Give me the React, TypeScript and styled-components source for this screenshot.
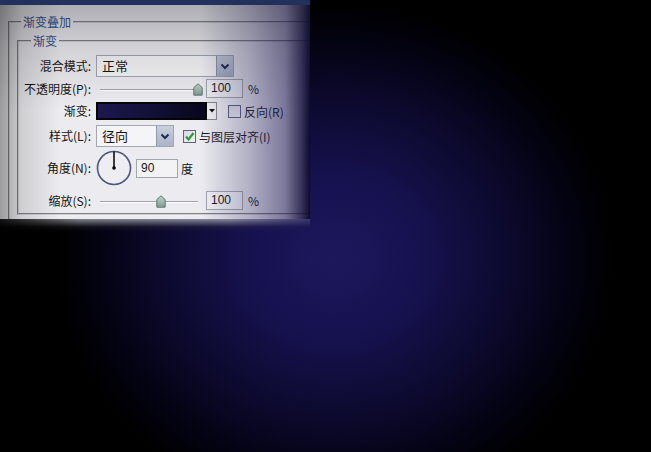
import React from "react";
import styled, { createGlobalStyle } from "styled-components";

const GlobalStyle = createGlobalStyle`
  html, body {
    margin: 0;
    padding: 0;
    background: #000;
  }
  body {
    font-family: "Noto Sans CJK SC", "Liberation Sans", sans-serif;
  }
`;

const Stage = styled.div`
  width: 651px;
  height: 452px;
  overflow: hidden;
  display: flex;
  flex-direction: column;
  align-items: flex-start;
  background:
    radial-gradient(ellipse 280px 255px at 335px 258px, #1d185c 0%, #161250 30%, #0d0a30 60%, #030210 86%, #000 100%),
    #000;
`;

const Panel = styled.div`
  position: relative;
  width: 310px;
  height: 219px;
  box-sizing: border-box;
  overflow: hidden;
  background: #ececf0;
  border-top: 5px solid #22305c;
  font-size: 12px;
  color: #141414;

  &::after {
    content: "";
    position: absolute;
    inset: -5px 0 0 0;
    pointer-events: none;
    background:
      linear-gradient(to right, rgba(0, 0, 0, 0.34) 0px, rgba(0, 0, 0, 0.12) 22px, rgba(0, 0, 0, 0) 60px),
      linear-gradient(to bottom, rgba(30, 30, 40, 0.32) 0px, rgba(30, 30, 40, 0.12) 50px, rgba(0, 0, 0, 0) 110px),
      linear-gradient(to right, rgba(20, 16, 70, 0) 200px, rgba(40, 34, 95, 0.3) 250px, rgba(30, 25, 85, 0.55) 285px, rgba(20, 16, 60, 0.85) 302px, #0e0b30 310px);
  }
`;

const Glow = styled.div`
  width: 310px;
  height: 13px;
  background: linear-gradient(to bottom, rgba(175, 175, 185, 0.75), rgba(60, 60, 70, 0.25) 60%, rgba(0, 0, 0, 0));
  -webkit-mask-image: linear-gradient(to right, rgba(0, 0, 0, 0.15) 0, #000 80px, #000 230px, rgba(0, 0, 0, 0.3) 310px);
  mask-image: linear-gradient(to right, rgba(0, 0, 0, 0.15) 0, #000 80px, #000 230px, rgba(0, 0, 0, 0.3) 310px);
`;

const Group = styled.fieldset<{ $ml: number; $pt: number; $pl: number }>`
  margin: 0 -40px 0 ${(p) => p.$ml}px;
  padding: ${(p) => p.$pt}px 0 4px ${(p) => p.$pl}px;
  border: 2px groove #d2d2d8;
  border-right: none;
  min-width: 0;
`;

const Legend = styled.legend<{ $ml: number }>`
  margin-left: ${(p) => p.$ml}px;
  padding: 0 2px;
  color: #34508c;
  font-size: 12px;
  line-height: 17px;
`;

const Rows = styled.div`
  display: flex;
  flex-direction: column;
`;

const Row = styled.div<{ $h: number; $mt: number }>`
  display: grid;
  grid-template-columns: 72px 1fr;
  column-gap: 5px;
  align-items: center;
  height: ${(p) => p.$h}px;
  margin-top: ${(p) => p.$mt}px;
`;

const Label = styled.span`
  text-align: right;
  white-space: nowrap;
  line-height: 14px;
`;

const Controls = styled.div`
  display: flex;
  align-items: center;
  height: 100%;
`;

const SelectBox = styled.div<{ $w: number }>`
  width: ${(p) => p.$w}px;
  height: 22px;
  box-sizing: border-box;
  display: flex;
  border: 1px solid #a2a6b0;
  background: #f5f5f7;
`;

const SelectText = styled.span`
  flex: 1;
  padding-left: 5px;
  line-height: 20px;
  font-size: 13px;
`;

const DropButton = styled.div`
  width: 16px;
  display: flex;
  align-items: center;
  justify-content: center;
  border-left: 1px solid #8e98ae;
  background: linear-gradient(to bottom, #c8cfdc, #aab4c6);
`;

const SliderBox = styled.div<{ $w: number }>`
  position: relative;
  width: ${(p) => p.$w}px;
  height: 18px;
  flex: none;
`;

const Track = styled.div`
  position: absolute;
  left: 4px;
  right: 4px;
  top: 9px;
  height: 1px;
  background: #a2a2a8;
  box-shadow: 0 1px 0 #ffffff;
`;

const Thumb = styled.svg`
  position: absolute;
  top: 3px;
  transform: translateX(-50%);
`;

const NumInput = styled.div<{ $w: number; $ml: number }>`
  width: ${(p) => p.$w}px;
  height: 19px;
  margin-left: ${(p) => p.$ml}px;
  box-sizing: border-box;
  border: 1px solid #a4a6ae;
  background: #f3f3f5;
  padding-left: 4px;
  font-family: "Liberation Sans", "Noto Sans CJK SC", sans-serif;
  font-size: 12px;
  line-height: 17px;
  color: #1a1a1a;
`;

const Unit = styled.span<{ $ml: number }>`
  margin-left: ${(p) => p.$ml}px;
  font-size: 12px;
`;

const Swatch = styled.div`
  width: 111px;
  height: 18px;
  box-sizing: border-box;
  border: 2px solid #050505;
  background: linear-gradient(to right, #1c1850, #120f36 55%, #07061a);
`;

const SmallArrow = styled.div`
  width: 10px;
  height: 18px;
  box-sizing: border-box;
  border: 1px solid #8a8a90;
  border-left: none;
  background: #f1f1f3;
  display: flex;
  align-items: center;
  justify-content: center;
`;

const Check = styled.div<{ $ml: number }>`
  width: 13px;
  height: 13px;
  margin-left: ${(p) => p.$ml}px;
  box-sizing: border-box;
  border: 1px solid #5c6480;
  background: linear-gradient(135deg, #d8d8e0, #f4f4f6);
  display: flex;
  align-items: center;
  justify-content: center;
  flex: none;
`;

const CheckText = styled.span`
  margin-left: 3px;
  white-space: nowrap;
  font-size: 12px;
  color: #1c1c1c;
`;

const Chevron = () => (
  <svg width="10" height="7" viewBox="0 0 10 7">
    <path d="M1.5 1.5 L5 5 L8.5 1.5" fill="none" stroke="#1d2958" strokeWidth="2" />
  </svg>
);

const ThumbIcon = ({ x }: { x: number }) => (
  <Thumb width="10" height="13" viewBox="0 0 10 13" style={{ left: x }}>
    <defs>
      <linearGradient id="th" x1="0" y1="0" x2="0" y2="1">
        <stop offset="0" stopColor="#c4d4ce" />
        <stop offset="1" stopColor="#7c9a90" />
      </linearGradient>
    </defs>
    <path d="M5 0.8 L9.2 4.6 L9.2 12.2 L0.8 12.2 L0.8 4.6 Z" fill="url(#th)" stroke="#5f7c72" strokeWidth="1" />
  </Thumb>
);

const Dial = () => (
  <svg width="36" height="36" viewBox="0 0 36 36" style={{ flex: "none" }}>
    <circle cx="18" cy="18" r="16.5" fill="#eeeef2" stroke="#4c5680" strokeWidth="1.6" />
    <line x1="18" y1="18" x2="18" y2="1.5" stroke="#000" strokeWidth="1.5" />
    <circle cx="18" cy="18" r="1.8" fill="#000" />
  </svg>
);

const Select = ({ w, text }: { w: number; text: string }) => (
  <SelectBox $w={w}>
    <SelectText>{text}</SelectText>
    <DropButton>
      <Chevron />
    </DropButton>
  </SelectBox>
);

export default function App() {
  return (
    <Stage>
      <GlobalStyle />
      <Panel>
        <Group $ml={8} $pt={2} $pl={7} style={{ marginTop: 8 }}>
          <Legend $ml={4}>渐变叠加</Legend>
          <Group $ml={0} $pt={6} $pl={0}>
            <Legend $ml={12}>渐变</Legend>
            <Rows>
              <Row $h={22} $mt={0}>
                <Label>混合模式:</Label>
                <Controls>
                  <Select w={138} text="正常" />
                </Controls>
              </Row>
              <Row $h={18} $mt={2}>
                <Label>不透明度(P):</Label>
                <Controls>
                  <SliderBox $w={106}>
                    <Track />
                    <ThumbIcon x={102} />
                  </SliderBox>
                  <NumInput $w={37} $ml={4}>100</NumInput>
                  <Unit $ml={5}>%</Unit>
                </Controls>
              </Row>
              <Row $h={18} $mt={5}>
                <Label>渐变:</Label>
                <Controls>
                  <Swatch />
                  <SmallArrow>
                    <svg width="6" height="4" viewBox="0 0 6 4">
                      <path d="M0 0 H6 L3 3.5 Z" fill="#111" />
                    </svg>
                  </SmallArrow>
                  <Check $ml={11} />
                  <CheckText>反向(R)</CheckText>
                </Controls>
              </Row>
              <Row $h={22} $mt={5}>
                <Label>样式(L):</Label>
                <Controls>
                  <Select w={78} text="径向" />
                  <Check $ml={9}>
                    <svg width="11" height="11" viewBox="0 0 11 11">
                      <path d="M2 5.5 L4.5 8.5 L9.5 2" fill="none" stroke="#2c9a3a" strokeWidth="2.2" />
                    </svg>
                  </Check>
                  <CheckText>与图层对齐(I)</CheckText>
                </Controls>
              </Row>
              <Row $h={36} $mt={3}>
                <Label>角度(N):</Label>
                <Controls>
                  <Dial />
                  <NumInput $w={42} $ml={4}>90</NumInput>
                  <Unit $ml={3}>度</Unit>
                </Controls>
              </Row>
              <Row $h={18} $mt={5}>
                <Label>缩放(S):</Label>
                <Controls>
                  <SliderBox $w={106}>
                    <Track />
                    <ThumbIcon x={65} />
                  </SliderBox>
                  <NumInput $w={37} $ml={4}>100</NumInput>
                  <Unit $ml={5}>%</Unit>
                </Controls>
              </Row>
            </Rows>
          </Group>
        </Group>
      </Panel>
      <Glow />
    </Stage>
  );
}
